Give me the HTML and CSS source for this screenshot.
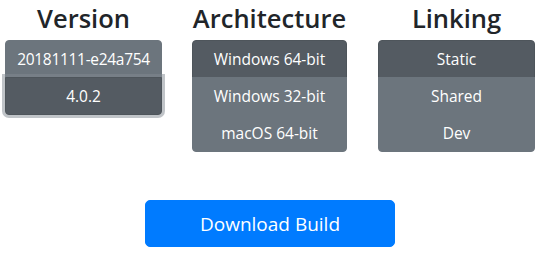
FILE: index.html
```html
<!DOCTYPE html>
<html lang="en">
<head>
    <meta charset="UTF-8">
    <meta name="viewport" content="width=device-width, initial-scale=1.0">
    <title>Download</title>
    <link rel="stylesheet" href="styles.css">
</head>
<body>

<div class="builder">
  <div class="options">
    <div class="option version">
      <h2>Version</h2>
      <div class="btn-group">
        <button class="btn" type="button">20181111-e24a754</button>
        <button class="btn active focus" type="button">4.0.2</button>
      </div>
    </div>

    <div class="option arch">
      <h2>Architecture</h2>
      <div class="btn-group">
        <button class="btn active" type="button">Windows 64-bit</button>
        <button class="btn" type="button">Windows 32-bit</button>
        <button class="btn" type="button">macOS 64-bit</button>
      </div>
    </div>

    <div class="option linking">
      <h2>Linking</h2>
      <div class="btn-group">
        <button class="btn active" type="button">Static</button>
        <button class="btn" type="button">Shared</button>
        <button class="btn" type="button">Dev</button>
      </div>
    </div>
  </div>

  <div class="download">
    <button class="btn-download" type="button">Download Build</button>
  </div>
</div>

</body>
</html>
```

FILE: styles.css
```css
body {
  margin: 0;
  background: #fff;
  font-family: "Open Sans", "Noto Sans", sans-serif;
  color: #212529;
}

.builder {
  width: 530px;
  padding: 0 0 0 5px;
}

.options {
  display: flex;
  gap: 30px;
}

.option {
  width: 157px;
  display: flex;
  flex-direction: column;
}

.option.arch {
  width: 155px;
  margin-right: 1px;
}

h2 {
  margin: 0 0 4px;
  font-size: 25.5px;
  font-weight: 600;
  line-height: 36px;
  text-align: center;
}

.btn-group {
  display: flex;
  flex-direction: column;
}

.btn {
  font-family: inherit;
  font-size: 15.5px;
  line-height: 22px;
  padding: 7px 4px;
  color: #fff;
  background: #6c757d;
  border: 1px solid #6c757d;
  text-align: center;
  white-space: nowrap;
  cursor: pointer;
}

.version .btn:first-child {
  letter-spacing: -0.3px;
}

.btn + .btn {
  margin-top: -1px;
}

.btn:first-child {
  border-radius: 4px 4px 0 0;
}

.btn:last-child {
  border-radius: 0 0 4px 4px;
}

.btn.active {
  background: #545b62;
  border-color: #4e555b;
}

.btn.focus {
  box-shadow: 0 0 0 3px rgba(130, 138, 145, 0.5);
}

.download {
  display: flex;
  justify-content: center;
  margin-top: 48px;
}

.btn-download {
  width: 250px;
  height: 47px;
  font-family: inherit;
  font-size: 19px;
  color: #fff;
  background: #007bff;
  border: 1px solid #007bff;
  border-radius: 5px;
  cursor: pointer;
}
```
